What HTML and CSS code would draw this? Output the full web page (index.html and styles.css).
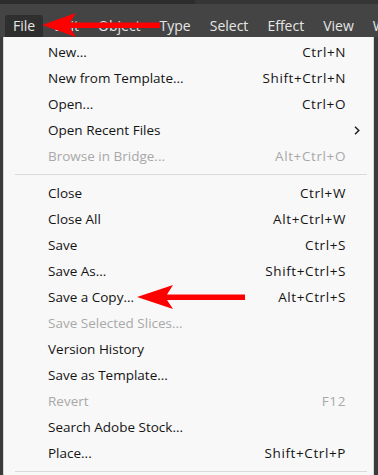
FILE: index.html
```html
<!DOCTYPE html>
<html lang="en">
<head>
    <meta charset="UTF-8">
    <meta name="viewport" content="width=device-width, initial-scale=1.0">
    <title>File Menu</title>
    <link rel="stylesheet" href="styles.css">
</head>
<body>
    <div class="topstrip">
        <div class="strip-left"></div>
        <div class="strip-right"></div>
    </div>
    <div class="menubar">
        <span class="menu-item active">File</span>
        <span class="menu-item">Edit</span>
        <span class="menu-item">Object</span>
        <span class="menu-item">Type</span>
        <span class="menu-item">Select</span>
        <span class="menu-item">Effect</span>
        <span class="menu-item">View</span>
        <span class="menu-item">W</span>
    </div>
    <div class="workspace">
        <div class="dropdown">
            <div class="row"><span>New...</span><span class="key">Ctrl+N</span><span></span></div>
            <div class="row"><span>New from Template...</span><span class="key">Shift+Ctrl+N</span><span></span></div>
            <div class="row"><span>Open...</span><span class="key">Ctrl+O</span><span></span></div>
            <div class="row"><span>Open Recent Files</span><span class="key"></span><span class="sub">
                <svg width="6" height="9" viewBox="0 0 6 9"><path d="M1 0.8 L4.8 4.5 L1 8.2" fill="none" stroke="#222" stroke-width="1.5"/></svg>
            </span></div>
            <div class="row disabled"><span>Browse in Bridge...</span><span class="key">Alt+Ctrl+O</span><span></span></div>
            <div class="sep"></div>
            <div class="row"><span>Close</span><span class="key">Ctrl+W</span><span></span></div>
            <div class="row"><span>Close All</span><span class="key">Alt+Ctrl+W</span><span></span></div>
            <div class="row"><span>Save</span><span class="key">Ctrl+S</span><span></span></div>
            <div class="row"><span>Save As...</span><span class="key">Shift+Ctrl+S</span><span></span></div>
            <div class="row"><span>Save a Copy...</span><span class="key">Alt+Ctrl+S</span><span></span></div>
            <div class="row disabled"><span>Save Selected Slices...</span><span class="key"></span><span></span></div>
            <div class="row"><span>Version History</span><span class="key"></span><span></span></div>
            <div class="row"><span>Save as Template...</span><span class="key"></span><span></span></div>
            <div class="row disabled"><span>Revert</span><span class="key">F12</span><span></span></div>
            <div class="row"><span>Search Adobe Stock...</span><span class="key"></span><span></span></div>
            <div class="row"><span>Place...</span><span class="key">Shift+Ctrl+P</span><span></span></div>
            <div class="sep"></div>
        </div>
    </div>

    <!-- red callout arrows drawn over the screenshot -->
    <svg class="arrow arrow-file" width="120" height="26" viewBox="0 0 120 26">
        <polygon points="0,12 34,0 28,9.5 118,9.5 118,15 28,15 34,24" fill="#ff0000"/>
    </svg>
    <svg class="arrow arrow-copy" width="110" height="26" viewBox="0 0 110 26">
        <polygon points="0,12 36,0 30,9.5 108,9.5 108,15 30,15 36,24" fill="#ff0000"/>
    </svg>
</body>
</html>
```

FILE: styles.css
```css
body {
    margin: 0;
    padding: 0;
    background: #3b3b3b;
    font-family: "Open Sans", "Noto Sans", sans-serif;
    overflow: hidden;
    position: relative;
}
.topstrip {
    display: flex;
    height: 4px;
}
.strip-left {
    width: 195px;
    background: #2c2c2c;
}
.strip-right {
    flex: 1;
    background: #353535;
}
.menubar {
    display: flex;
    align-items: flex-end;
    height: 33px;
    padding-left: 5px;
    background: #444444;
    white-space: nowrap;
}
.menu-item {
    color: #e6e6e6;
    font-size: 14px;
    padding: 0 8px;
    height: 22px;
    line-height: 21px;
    margin-right: 3px;
}
.menu-item.active {
    background: #2f2f2f;
    border-radius: 3px 3px 0 0;
}
.workspace {
    padding-left: 3px;
}
.dropdown {
    width: 369px;
    background: #f8f8f8;
    border: 1px solid #d6d6d6;
    border-top: none;
    border-radius: 0 0 4px 4px;
    padding-top: 2px;
}
.row {
    display: grid;
    grid-template-columns: 1fr auto 27px;
    align-items: center;
    height: 26px;
    padding-left: 44px;
    font-size: 13.5px;
    color: #141414;
}
.row.disabled {
    color: #a8a8a8;
}
.key {
    text-align: right;
    letter-spacing: 0.6px;
}
.sub {
    display: flex;
    padding-left: 8px;
}
.sep {
    height: 1px;
    background: #dadada;
    margin: 5px 6px 5px 11px;
}
.arrow {
    position: absolute;
}
.arrow-file {
    left: 42px;
    top: 13px;
}
.arrow-copy {
    left: 137px;
    top: 285px;
}
```
